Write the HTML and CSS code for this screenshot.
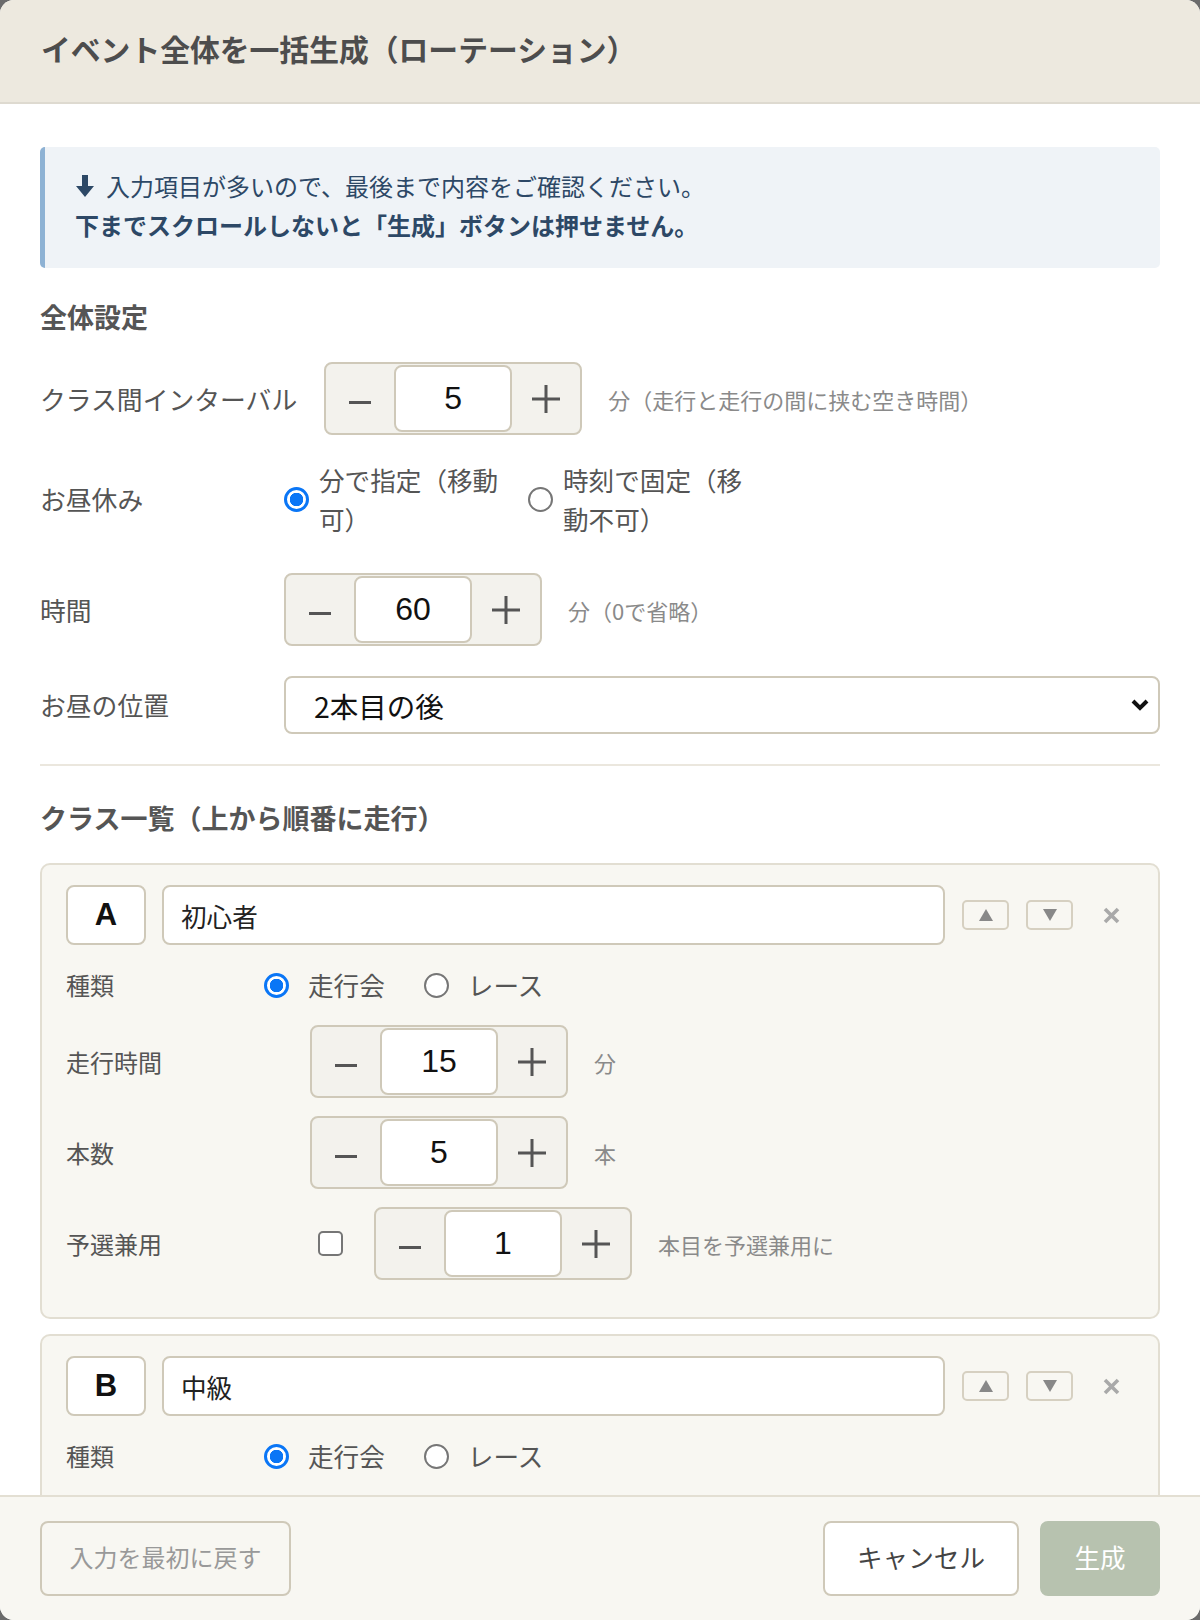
FILE: index.html
```html
<!DOCTYPE html>
<html lang="ja">
<head>
<meta charset="utf-8">
<title>イベント全体を一括生成（ローテーション）</title>
<link rel="stylesheet" href="styles.css">
</head>
<body>
<div class="modal">
  <header class="modal-header">
    <h1 class="modal-title">イベント全体を一括生成（ローテーション）</h1>
  </header>

  <div class="modal-body">
    <div class="notice">
      <div class="notice-line">
        <svg class="notice-arrow" width="20" height="22" viewBox="0 0 20 22"><path d="M7 0h6v11h6L10 22 1 11h6z" fill="#2d4866"/></svg>
        <span>入力項目が多いので、最後まで内容をご確認ください。</span>
      </div>
      <div class="notice-line"><strong>下までスクロールしないと「生成」ボタンは押せません。</strong></div>
    </div>

    <h2 class="section-title">全体設定</h2>

    <div class="form-row tight">
      <div class="form-label">クラス間インターバル</div>
      <div class="stepper">
        <div class="step-btn"><svg width="22" height="22" viewBox="0 0 22 22"><rect x="0" y="13" width="22" height="3" fill="#555"/></svg></div>
        <div class="step-value">5</div>
        <div class="step-btn"><svg width="28" height="28" viewBox="0 0 28 28"><rect x="0" y="12.5" width="28" height="3" fill="#555"/><rect x="12.5" y="0" width="3" height="28" fill="#555"/></svg></div>
      </div>
      <div class="hint">分（走行と走行の間に挟む空き時間）</div>
    </div>

    <div class="form-row radio-row">
      <div class="form-label">お昼休み</div>
      <div class="radio-group">
        <div class="radio-option">
          <span class="radio checked"></span>
          <span class="radio-text">分で指定（移動可）</span>
        </div>
        <div class="radio-option">
          <span class="radio"></span>
          <span class="radio-text">時刻で固定（移動不可）</span>
        </div>
      </div>
    </div>

    <div class="form-row">
      <div class="form-label">時間</div>
      <div class="stepper">
        <div class="step-btn"><svg width="22" height="22" viewBox="0 0 22 22"><rect x="0" y="13" width="22" height="3" fill="#555"/></svg></div>
        <div class="step-value">60</div>
        <div class="step-btn"><svg width="28" height="28" viewBox="0 0 28 28"><rect x="0" y="12.5" width="28" height="3" fill="#555"/><rect x="12.5" y="0" width="3" height="28" fill="#555"/></svg></div>
      </div>
      <div class="hint">分（0で省略）</div>
    </div>

    <div class="form-row last">
      <div class="form-label">お昼の位置</div>
      <div class="select">
        <span>2本目の後</span>
        <svg width="18" height="12" viewBox="0 0 18 12"><polyline points="2,2 9,9 16,2" fill="none" stroke="#111" stroke-width="4"/></svg>
      </div>
    </div>

    <hr class="divider">

    <h2 class="section-title list-title">クラス一覧（上から順番に走行）</h2>

    <div class="card">
      <div class="card-header">
        <div class="badge">A</div>
        <div class="name-input">初心者</div>
        <div class="arrow-btn"><svg width="14" height="12" viewBox="0 0 14 12"><polygon points="7,0 14,12 0,12" fill="#888"/></svg></div>
        <div class="arrow-btn"><svg width="14" height="12" viewBox="0 0 14 12"><polygon points="0,0 14,0 7,12" fill="#888"/></svg></div>
        <div class="close-btn"><svg width="17" height="17" viewBox="0 0 17 17"><path d="M2 2L15 15M15 2L2 15" stroke="#a9a9a9" stroke-width="3.6"/></svg></div>
      </div>
      <div class="card-row type-row">
        <div class="card-label narrow">種類</div>
        <div class="type-option"><span class="radio checked"></span><span class="type-text">走行会</span></div>
        <div class="type-option"><span class="radio"></span><span class="type-text">レース</span></div>
      </div>
      <div class="card-row">
        <div class="card-label">走行時間</div>
        <div class="stepper">
          <div class="step-btn"><svg width="22" height="22" viewBox="0 0 22 22"><rect x="0" y="13" width="22" height="3" fill="#555"/></svg></div>
          <div class="step-value">15</div>
          <div class="step-btn"><svg width="28" height="28" viewBox="0 0 28 28"><rect x="0" y="12.5" width="28" height="3" fill="#555"/><rect x="12.5" y="0" width="3" height="28" fill="#555"/></svg></div>
        </div>
        <div class="hint">分</div>
      </div>
      <div class="card-row">
        <div class="card-label">本数</div>
        <div class="stepper">
          <div class="step-btn"><svg width="22" height="22" viewBox="0 0 22 22"><rect x="0" y="13" width="22" height="3" fill="#555"/></svg></div>
          <div class="step-value">5</div>
          <div class="step-btn"><svg width="28" height="28" viewBox="0 0 28 28"><rect x="0" y="12.5" width="28" height="3" fill="#555"/><rect x="12.5" y="0" width="3" height="28" fill="#555"/></svg></div>
        </div>
        <div class="hint">本</div>
      </div>
      <div class="card-row last">
        <div class="card-label">予選兼用</div>
        <span class="checkbox"></span>
        <div class="stepper">
          <div class="step-btn"><svg width="22" height="22" viewBox="0 0 22 22"><rect x="0" y="13" width="22" height="3" fill="#555"/></svg></div>
          <div class="step-value">1</div>
          <div class="step-btn"><svg width="28" height="28" viewBox="0 0 28 28"><rect x="0" y="12.5" width="28" height="3" fill="#555"/><rect x="12.5" y="0" width="3" height="28" fill="#555"/></svg></div>
        </div>
        <div class="hint">本目を予選兼用に</div>
      </div>
    </div>

    <div class="card">
      <div class="card-header">
        <div class="badge">B</div>
        <div class="name-input">中級</div>
        <div class="arrow-btn"><svg width="14" height="12" viewBox="0 0 14 12"><polygon points="7,0 14,12 0,12" fill="#888"/></svg></div>
        <div class="arrow-btn"><svg width="14" height="12" viewBox="0 0 14 12"><polygon points="0,0 14,0 7,12" fill="#888"/></svg></div>
        <div class="close-btn"><svg width="17" height="17" viewBox="0 0 17 17"><path d="M2 2L15 15M15 2L2 15" stroke="#a9a9a9" stroke-width="3.6"/></svg></div>
      </div>
      <div class="card-row type-row last">
        <div class="card-label narrow">種類</div>
        <div class="type-option"><span class="radio checked"></span><span class="type-text">走行会</span></div>
        <div class="type-option"><span class="radio"></span><span class="type-text">レース</span></div>
      </div>
    </div>
  </div>

  <footer class="modal-footer">
    <button class="btn btn-reset" type="button">入力を最初に戻す</button>
    <button class="btn btn-cancel" type="button">キャンセル</button>
    <button class="btn btn-primary" type="button">生成</button>
  </footer>
</div>
</body>
</html>
```

FILE: styles.css
```css
* { box-sizing: border-box; }

html, body { margin: 0; }

body {
  background: #6b6b6b;
  font-family: "Noto Sans CJK JP", "Noto Sans", sans-serif;
  color: #555;
}

.modal {
  width: 1200px;
  height: 1620px;
  background: #fff;
  border-radius: 14px;
  overflow: hidden;
  display: flex;
  flex-direction: column;
}

/* header */
.modal-header {
  flex: none;
  height: 104px;
  background: #ede9df;
  border-bottom: 2px solid #dedad0;
  display: flex;
  align-items: center;
  padding: 0 41px 6px;
}

.modal-title {
  margin: 0;
  font-size: 29.8px;
  font-weight: 700;
  line-height: 40px;
  color: #4d4d4d;
}

/* body */
.modal-body {
  flex: 1;
  overflow: hidden;
  padding: 43px 40px 0;
}

.notice {
  background: #eff3f7;
  border-left: 5px solid #8eb2d4;
  border-radius: 5px;
  padding: 19px 30px 24px;
  color: #2d4866;
  font-size: 24px;
  line-height: 39px;
}

.notice-line {
  display: flex;
  align-items: center;
}

.notice-arrow {
  flex: none;
  margin-right: 11px;
}

.notice strong { font-weight: 700; }

.section-title {
  margin: 31px 0 27px;
  font-size: 27px;
  line-height: 36px;
  font-weight: 700;
  color: #555;
}

.list-title { margin-top: 34px; }

.form-row {
  display: flex;
  align-items: center;
  margin-bottom: 30px;
}

.form-row.tight { margin-bottom: 25px; }

.form-row.last { margin-bottom: 0; }

.radio-row { padding-bottom: 5px; }

.form-label {
  flex: none;
  min-width: 244px;
  padding-right: 27px;
  font-size: 25.8px;
  line-height: 36px;
  color: #555;
}

/* stepper */
.stepper {
  flex: none;
  display: flex;
  align-items: center;
  width: 258px;
  height: 73px;
  border: 2px solid #cfc9b9;
  border-radius: 8px;
  background: #f3f2ed;
}

.step-btn {
  flex: 1;
  height: 100%;
  display: flex;
  align-items: center;
  justify-content: center;
}

.step-value {
  flex: none;
  width: 118px;
  height: 67px;
  background: #fff;
  border: 2px solid #cfc9b9;
  border-radius: 8px;
  display: flex;
  align-items: center;
  justify-content: center;
  font-family: "Liberation Sans", Arial, sans-serif;
  font-size: 32px;
  color: #111;
}

.hint {
  margin-left: 26px;
  font-size: 22px;
  line-height: 30px;
  color: #8a8a8a;
}

/* radios */
.radio-group {
  display: flex;
  gap: 24px;
}

.radio-option {
  display: flex;
  align-items: center;
}

.radio {
  flex: none;
  display: inline-block;
  width: 25px;
  height: 25px;
  border-radius: 50%;
  border: 2px solid #767676;
  background: #fff;
}

.radio.checked {
  border: 3px solid #0a76f6;
  background: radial-gradient(circle, #0a76f6 0 6.5px, #fff 7px);
}

.radio-text {
  width: 185px;
  margin-left: 10px;
  font-size: 25.6px;
  line-height: 39px;
  color: #555;
}

/* select */
.select {
  flex: 1;
  height: 58px;
  background: #fff;
  border: 2px solid #cfc9b9;
  border-radius: 8px;
  display: flex;
  align-items: center;
  justify-content: space-between;
  padding: 0 9px 0 28px;
  font-size: 28.5px;
  color: #111;
}

.divider {
  margin: 30px 0 0;
  border: 0;
  border-top: 2px solid #ebe7de;
}

/* class card */
.card {
  background: #f8f7f2;
  border: 2px solid #e2ded2;
  border-radius: 10px;
  padding: 20px 24px 37px;
  margin-bottom: 15px;
}

.card-header {
  display: flex;
  align-items: center;
  height: 60px;
  margin-bottom: 18px;
}

.badge {
  flex: none;
  width: 80px;
  height: 60px;
  background: #fff;
  border: 2px solid #cfc9b9;
  border-radius: 8px;
  display: flex;
  align-items: center;
  justify-content: center;
  font-family: "Liberation Sans", Arial, sans-serif;
  font-weight: 700;
  font-size: 31px;
  color: #111;
}

.name-input {
  flex: 1;
  height: 60px;
  margin-left: 16px;
  background: #fff;
  border: 2px solid #cfc9b9;
  border-radius: 8px;
  display: flex;
  align-items: center;
  padding-left: 17px;
  font-size: 25.6px;
  color: #222;
}

.arrow-btn {
  flex: none;
  width: 47px;
  height: 30px;
  margin-left: 17px;
  border: 2px solid #d6d0c1;
  border-radius: 5px;
  display: flex;
  align-items: center;
  justify-content: center;
}

.close-btn {
  flex: none;
  width: 46px;
  height: 30px;
  margin-left: 15px;
  display: flex;
  align-items: center;
  justify-content: center;
}

.card-row {
  display: flex;
  align-items: center;
  margin-bottom: 18px;
}

.card-row.last { margin-bottom: 0; }

.type-row { height: 44px; }

.card-label {
  flex: none;
  width: 244px;
  font-size: 24px;
  line-height: 36px;
  color: #555;
}

.card-label.narrow { width: 198px; }

.type-option {
  display: flex;
  align-items: center;
  margin-right: 39px;
}

.type-text {
  margin-left: 19px;
  font-size: 25.6px;
  line-height: 36px;
  color: #555;
}

.checkbox {
  flex: none;
  width: 25px;
  height: 25px;
  margin: 0 31px 0 8px;
  background: #fff;
  border: 2px solid #767676;
  border-radius: 5px;
}

/* footer */
.modal-footer {
  flex: none;
  display: flex;
  align-items: center;
  background: #f8f7f2;
  border-top: 2px solid #e3dfd3;
  padding: 24px 40px 24px;
}

.btn {
  height: 75px;
  border: 2px solid #cfc9b9;
  border-radius: 8px;
  font-family: "Noto Sans CJK JP", "Noto Sans", sans-serif;
  line-height: 36px;
  padding: 0 0 3px;
  display: flex;
  align-items: center;
  justify-content: center;
}

.btn-reset {
  width: 251px;
  background: transparent;
  color: #999;
  font-size: 24px;
}

.btn-cancel {
  width: 196px;
  margin-left: auto;
  background: #fff;
  color: #444;
  font-size: 25.6px;
}

.btn-primary {
  width: 120px;
  margin-left: 21px;
  background: #b7c2af;
  border-color: #b7c2af;
  color: #fff;
  font-size: 25.6px;
}
```
